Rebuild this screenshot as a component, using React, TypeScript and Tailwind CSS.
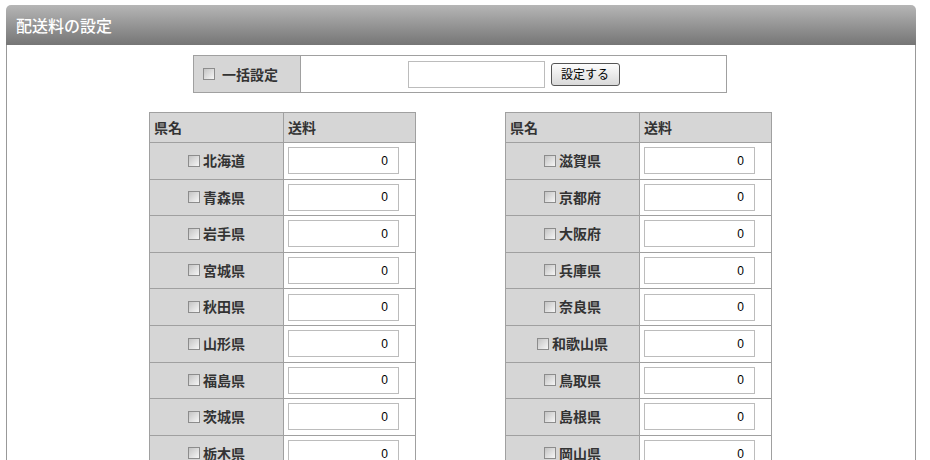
const LEFT = ['北海道', '青森県', '岩手県', '宮城県', '秋田県', '山形県', '福島県', '茨城県', '栃木県'];
const RIGHT = ['滋賀県', '京都府', '大阪府', '兵庫県', '奈良県', '和歌山県', '鳥取県', '島根県', '岡山県'];

const font = { fontFamily: '"Noto Sans CJK JP", "Liberation Sans", sans-serif' };

function Check() {
  return (
    <span className="inline-block w-[12px] h-[12px] border border-[#8c8c8c] bg-gradient-to-br from-[#c4c4c4] to-[#f6f6f6] align-middle" />
  );
}

function FeeTable({ prefs }: { prefs: string[] }) {
  return (
    <table className="w-[267px] border-collapse text-[14px] text-[#333]">
      <thead>
        <tr className="h-[30px] bg-[#d6d6d6]">
          <th className="w-[134px] border border-[#a0a0a0] px-[4px] text-left font-bold">県名</th>
          <th className="border border-[#a0a0a0] px-[4px] text-left font-bold">送料</th>
        </tr>
      </thead>
      <tbody>
        {prefs.map((p) => (
          <tr key={p} className="h-[36.6px]">
            <td className="border border-[#a0a0a0] bg-[#d6d6d6] text-center font-bold">
              <span className="inline-flex items-center gap-[3px]">
                <Check />
                {p}
              </span>
            </td>
            <td className="border border-[#a0a0a0] bg-white px-[4px]">
              <div
                className="w-[111px] h-[27px] border border-[#bcbcbc] flex items-center justify-end pr-[10px] text-[12px] text-black"
                style={{ fontFamily: '"Liberation Sans", sans-serif' }}
              >
                0
              </div>
            </td>
          </tr>
        ))}
      </tbody>
    </table>
  );
}

export default function App() {
  return (
    <div className="w-[930px] bg-white pt-[5px]" style={font}>
      <div className="ml-[6px] w-[910px]">
        {/* Header */}
        <div className="h-[40px] rounded-t-[5px] bg-gradient-to-b from-[#b6b6b6] to-[#767676] flex items-center px-[10px]">
          <h1 className="text-[16px] font-medium text-white">配送料の設定</h1>
        </div>

        {/* Body */}
        <div className="border-x border-[#999] pt-[10px] pb-[20px]">
          {/* Bulk setting */}
          <div className="ml-[186px] w-[534px] h-[38px] flex border border-[#a0a0a0] text-[14px] text-[#333]">
            <div className="w-[107px] bg-[#d6d6d6] border-r border-[#a0a0a0] flex items-center pl-[9px] gap-[7px] font-bold">
              <Check />
              一括設定
            </div>
            <div className="flex-1 flex items-center justify-center gap-[6px]">
              <div className="w-[137px] h-[27px] border border-[#bcbcbc]" />
              <button
                type="button"
                className="w-[69px] h-[23px] rounded-[3px] border border-[#555] bg-gradient-to-b from-[#fdfdfd] to-[#d9d9d9] text-[12px] text-black"
              >
                設定する
              </button>
            </div>
          </div>

          {/* Fee tables */}
          <div className="mt-[19px] flex gap-[89px] pl-[142px]">
            <FeeTable prefs={LEFT} />
            <FeeTable prefs={RIGHT} />
          </div>
        </div>
      </div>
    </div>
  );
}
